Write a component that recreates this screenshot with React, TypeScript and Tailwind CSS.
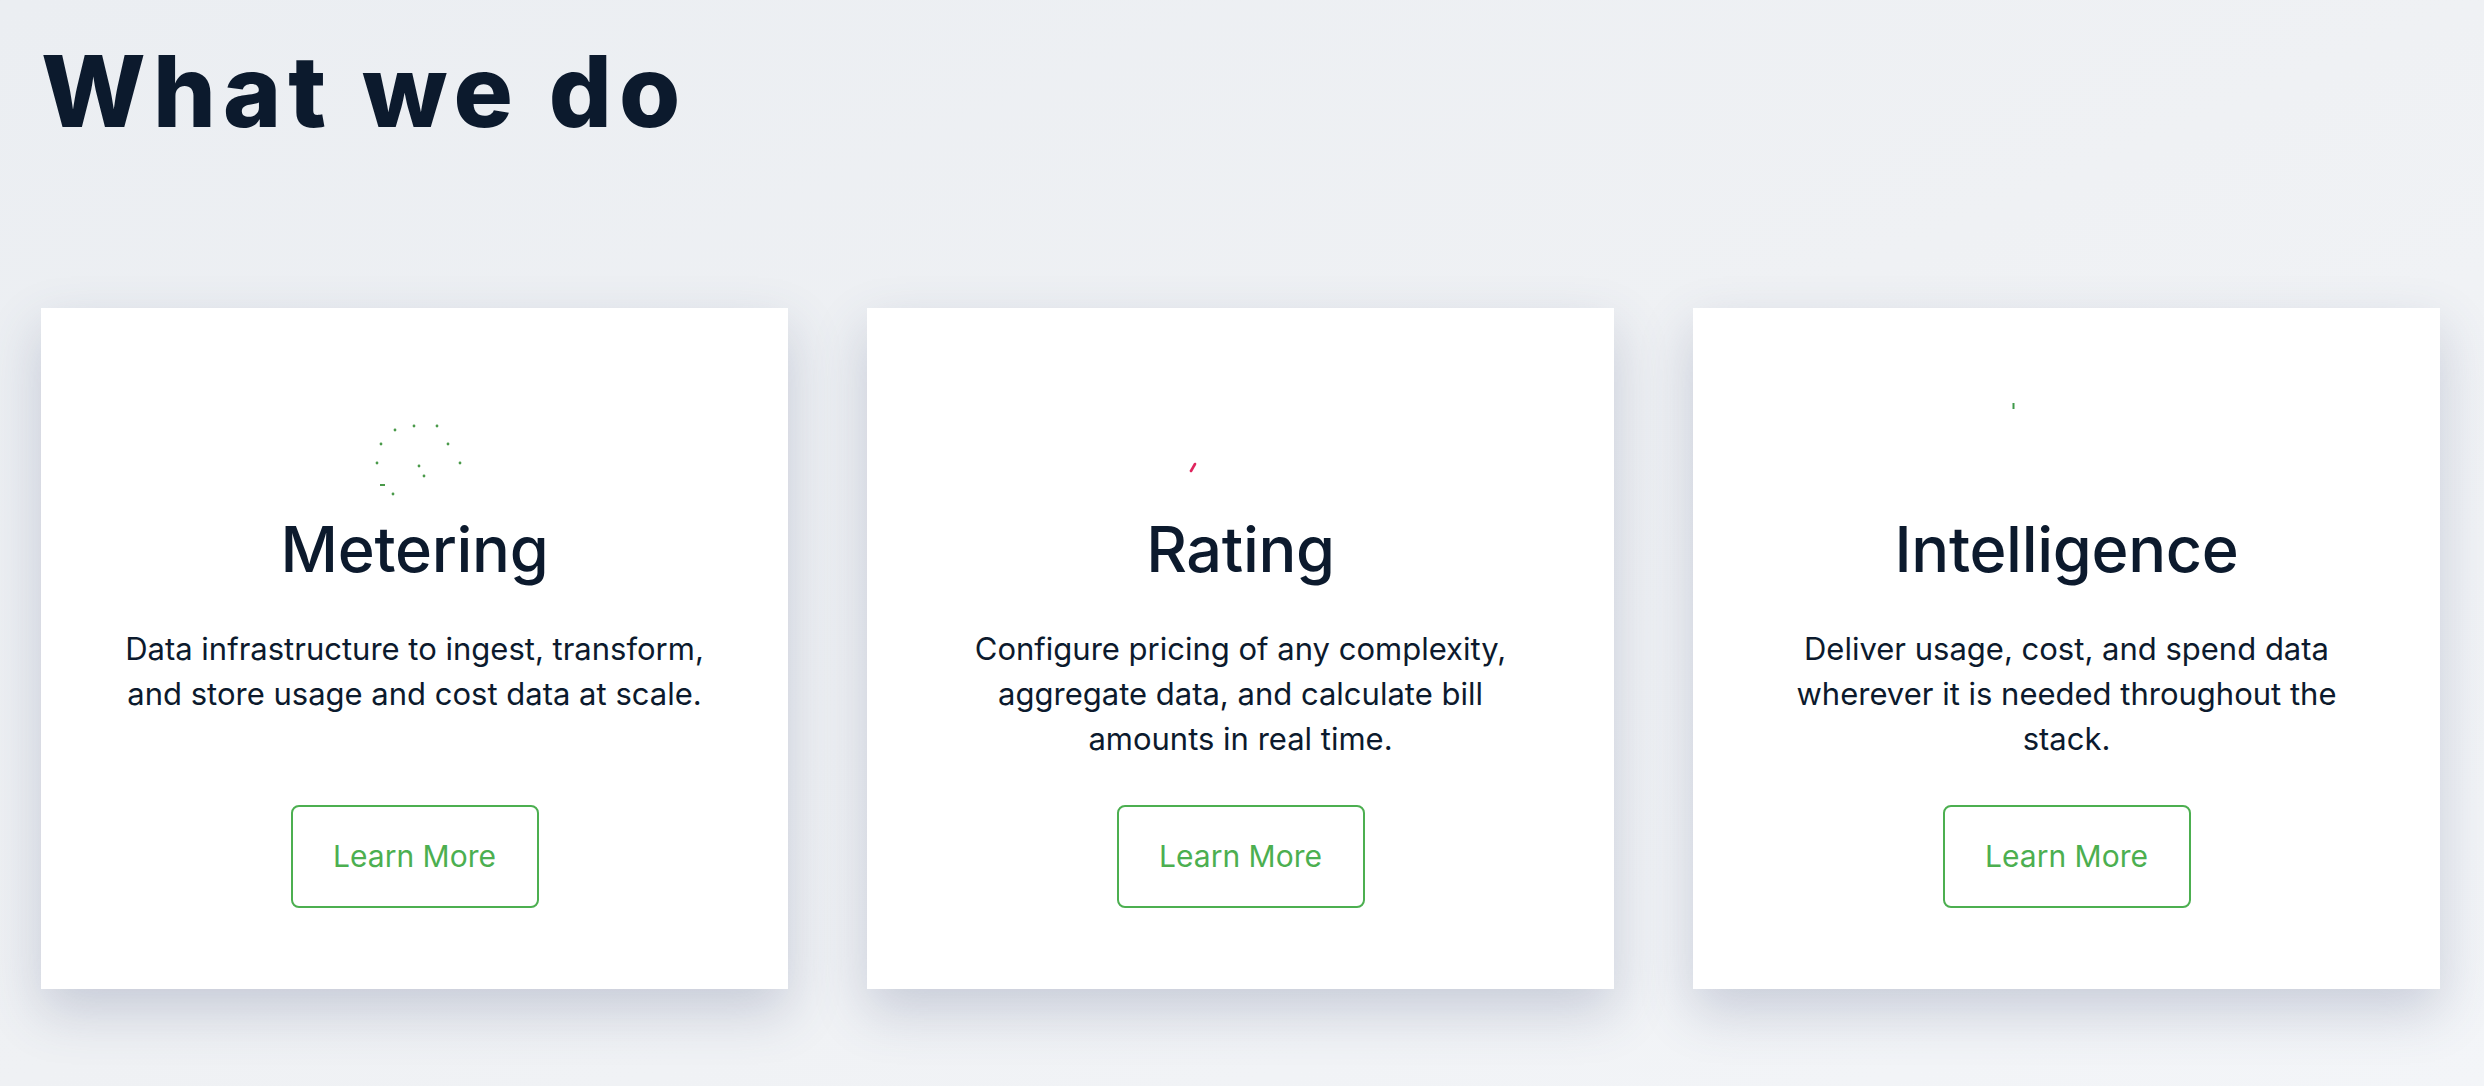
import React from "react";

type Card = {
  title: string;
  lines: string[];
  icon: React.ReactNode;
};

const meteringDots: [number, number][] = [
  [130, 52], [149, 48], [172, 48], [183, 66], [195, 85], [154, 88], [159, 98], [128, 116], [112, 85], [116, 66],
];

const MeteringIcon = () => (
  <svg width="300" height="140" viewBox="0 0 300 140">
    {meteringDots.map(([x, y], i) => (
      <circle key={i} cx={x} cy={y} r="1.4" fill="#4a9a4a" />
    ))}
    <rect x="115" y="106" width="5" height="2" fill="#4a9a4a" />
  </svg>
);

const RatingIcon = () => (
  <svg width="300" height="140" viewBox="0 0 300 140">
    <line x1="100" y1="93" x2="104" y2="86" stroke="#e0245e" strokeWidth="2.6" strokeLinecap="round" />
  </svg>
);

const IntelligenceIcon = () => (
  <svg width="300" height="140" viewBox="0 0 300 140">
    <rect x="95.5" y="25" width="2" height="6" fill="#3e9a4a" />
  </svg>
);

const cards: Card[] = [
  {
    title: "Metering",
    lines: ["Data infrastructure to ingest, transform,", "and store usage and cost data at scale."],
    icon: <MeteringIcon />,
  },
  {
    title: "Rating",
    lines: ["Configure pricing of any complexity,", "aggregate data, and calculate bill", "amounts in real time."],
    icon: <RatingIcon />,
  },
  {
    title: "Intelligence",
    lines: ["Deliver usage, cost, and spend data", "wherever it is needed throughout the", "stack."],
    icon: <IntelligenceIcon />,
  },
];

export default function App() {
  return (
    <div
      className="min-h-[1086px] w-full bg-gradient-to-br from-[#ebeef2] via-[#eff1f4] to-[#f3f5f8] pl-[41px] pr-[44px] pt-[42px]"
      style={{ fontFamily: "Inter, 'Noto Sans', sans-serif" }}
    >
      <h1 className="text-[99px] font-extrabold leading-none tracking-[0.072em] text-[#0c1a2d]" style={{ fontFamily: "Inter, sans-serif" }}>
        What we do
      </h1>
      <div className="mt-[167px] flex gap-[79px]">
        {cards.map((c) => (
          <div
            key={c.title}
            className="flex h-[681px] w-[747px] flex-col items-center bg-white pt-[70px] pb-[81px] shadow-[0_22px_50px_rgba(71,85,125,0.24)]"
          >
            <div className="h-[140px] w-[300px]">{c.icon}</div>
            <h2 className="text-[63px] font-medium leading-none tracking-[-0.005em] text-[#0c1a2d]">{c.title}</h2>
            <p className="mt-[45px] text-center text-[31px] leading-[45px] text-[#0c1a2d]">
              {c.lines.map((l, i) => (
                <span key={i} className="block whitespace-nowrap">
                  {l}
                </span>
              ))}
            </p>
            <button className="mt-auto flex h-[103px] w-[248px] items-center justify-center rounded-[8px] border-2 border-[#4caf50] text-[30px] text-[#4caf50]">
              Learn More
            </button>
          </div>
        ))}
      </div>
    </div>
  );
}
